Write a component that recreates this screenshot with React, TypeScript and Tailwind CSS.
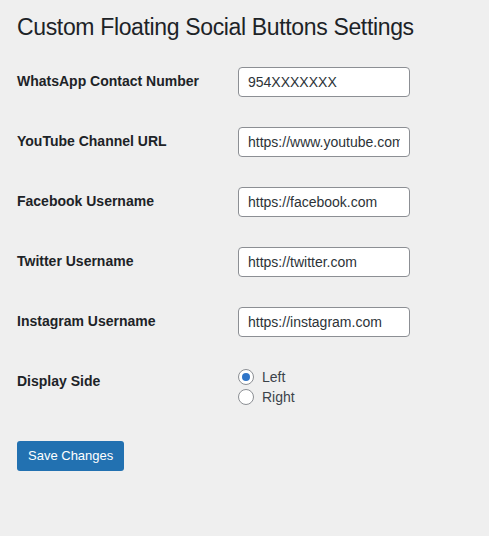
import React, { useState } from 'react';

const fields = [
  { label: 'WhatsApp Contact Number', value: '954XXXXXXX' },
  { label: 'YouTube Channel URL', value: 'https://www.youtube.com/' },
  { label: 'Facebook Username', value: 'https://facebook.com' },
  { label: 'Twitter Username', value: 'https://twitter.com' },
  { label: 'Instagram Username', value: 'https://instagram.com' },
];

function Radio({ checked, label, onSelect }: { checked: boolean; label: string; onSelect: () => void }) {
  return (
    <label className="flex h-5 cursor-pointer items-center gap-[8px]" onClick={onSelect}>
      <span className="flex h-4 w-4 items-center justify-center rounded-full border border-[#8c8f94] bg-white">
        {checked && <span className="h-2 w-2 rounded-full bg-[#2f75c8]" />}
      </span>
      <span className="text-[14px] text-[#3c434a]">{label}</span>
    </label>
  );
}

export default function App() {
  const [side, setSide] = useState<'left' | 'right'>('left');

  return (
    <div
      className="min-h-[536px] bg-[#efefef] pl-[17px] text-[#1d2327]"
      style={{ fontFamily: '"Liberation Sans", Arial, sans-serif' }}
    >
      <h1 className="pt-[12px] text-[23px] leading-[30px] font-normal tracking-[-0.35px] text-[#1d2327]">
        Custom Floating Social Buttons Settings
      </h1>

      <div className="mt-[10px]">
        {fields.map((f) => (
          <div key={f.label} className="flex h-[60px]">
            <div className="w-[221px] pt-[20px] text-[14px] leading-[18px] font-bold text-[#1d2327]">
              {f.label}
            </div>
            <div className="pt-[15px]">
              <input
                type="text"
                defaultValue={f.value}
                className="h-[30px] w-[172px] rounded-[4px] border border-[#8c8f94] bg-white px-[9px] text-[14px] text-[#2c3338] outline-none"
              />
            </div>
          </div>
        ))}

        <div className="flex h-[70px]">
          <div className="w-[221px] pt-[20px] text-[14px] leading-[18px] font-bold text-[#1d2327]">
            Display Side
          </div>
          <div className="pt-[15px]">
            <Radio checked={side === 'left'} label="Left" onSelect={() => setSide('left')} />
            <Radio checked={side === 'right'} label="Right" onSelect={() => setSide('right')} />
          </div>
        </div>
      </div>

      <div className="mt-[19px]">
        <button
          type="button"
          className="h-[30px] rounded-[3px] bg-[#2271b1] px-[11px] text-[13px] text-white"
        >
          Save Changes
        </button>
      </div>
    </div>
  );
}
